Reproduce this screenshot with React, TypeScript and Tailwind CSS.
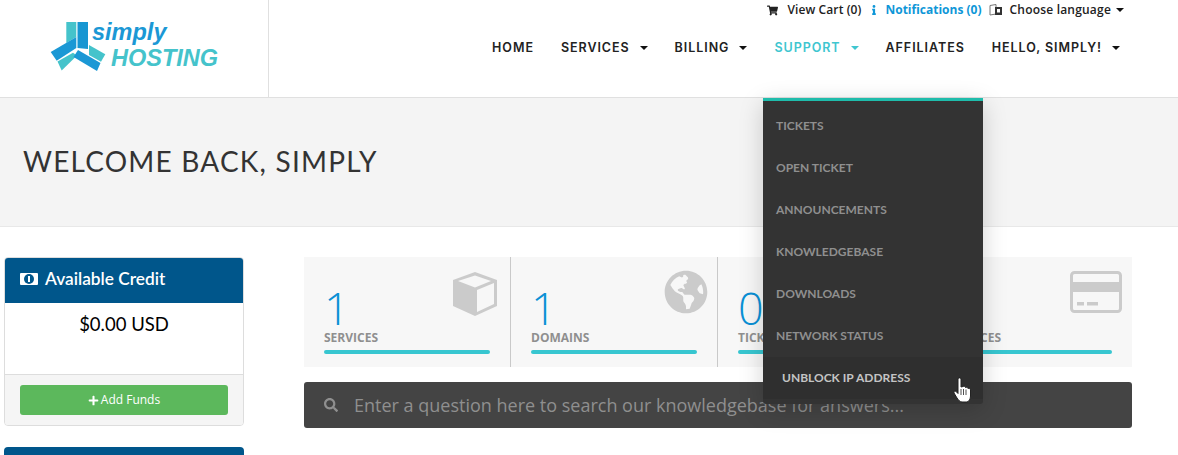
import React from 'react';
import { FaShoppingCart, FaInfo, FaPlus, FaGlobeAmericas, FaSearch } from 'react-icons/fa';

const Caret = ({ className = 'border-t-[#111]' }: { className?: string }) => (
  <span className={`inline-block w-0 h-0 border-x-[4px] border-x-transparent border-t-[4px] ${className}`} />
);

const Logo = () => (
  <div className="flex items-start w-[168px] h-[52px] relative">
    <svg width="58" height="52" viewBox="50 21 58 52" className="shrink-0">
      <polygon points="66.3,22 76.3,22 76.3,37 66.3,43" fill="#45c3cb" />
      <polygon points="77.5,22 88,22 88,49 77.5,48" fill="#1796d2" />
      <polygon points="50.7,52 76.3,37 76.3,48 56.7,60.7" fill="#1b98d5" />
      <polygon points="57.5,61.5 73,52.7 77,55.5 61.7,70.5" fill="#45c3cb" />
      <polygon points="89,45 105.3,54.3 101,61.7 89,55" fill="#45c3cb" />
      <polygon points="78,50 100.5,63 97,71 73.5,57 " fill="#1b98d5" />
    </svg>
    <div className="font-['Liberation_Sans',sans-serif] font-bold italic leading-none ml-[-15px]">
      <div className="text-[#1b98d5] text-[23.5px] -ml-[1px]">simply</div>
      <div className="text-[#45c3cb] text-[23.5px] mt-[2px] ml-[18px]">HOSTING</div>
    </div>
  </div>
);

const NavItem = ({ label, caret, active }: { label: string; caret?: boolean; active?: boolean }) => (
  <div className={`flex items-center gap-[10px] ${active ? 'text-[#3fc6d0]' : 'text-[#222]'}`}>
    <span>{label}</span>
    {caret && <Caret className={active ? 'border-t-[#3fc6d0]' : 'border-t-[#111]'} />}
  </div>
);

const Stat = ({ value, label, icon, iconClass, last }: { value: string; label: string; icon?: React.ReactNode; iconClass?: string; last?: boolean }) => (
  <div className={`relative w-[207px] h-full pl-5 ${last ? 'pr-5' : 'pr-5 border-r border-[#c9c9c9]'}`}>
    <div className={`absolute ${iconClass}`}>{icon}</div>
    <div className="h-[73px] pt-[30px]">
      <div className="font-['Open_Sans',sans-serif] font-light text-[#0a90d5] text-[45px] leading-[42px] h-[42px]">{value}</div>
    </div>
    <div className="font-['Open_Sans',sans-serif] font-bold text-[#8f8f8f] text-[12px] leading-4">{label}</div>
    <div className="h-1 mt-[4px] rounded-sm bg-[#37c6d0]" />
  </div>
);

const menuItems = ['TICKETS', 'OPEN TICKET', 'ANNOUNCEMENTS', 'KNOWLEDGEBASE', 'DOWNLOADS', 'NETWORK STATUS'];

export default function App() {
  return (
    <div className="relative w-[1178px] h-[455px] overflow-hidden bg-white font-['Open_Sans',sans-serif]">
      {/* header */}
      <div className="flex h-[98px] border-b border-[#e0e0e0]">
        <div className="w-[269px] border-r border-[#e0e0e0] pl-[50px] pt-[21px] shrink-0">
          <Logo />
        </div>
        <div className="flex-1 relative">
          <div className="flex items-center justify-end h-[20px] pr-[54px] text-[12px] font-semibold text-[#222]">
            <FaShoppingCart className="text-[11px] mr-[9px]" />
            <span className="mr-[8px] tracking-[0.1px]">View Cart (0)</span>
            <FaInfo className="text-[10px] text-[#0f97d8] mr-[6px]" />
            <span className="text-[#0f97d8] font-bold mr-[7px]">Notifications (0)</span>
            <svg width="14" height="12" viewBox="0 0 14 12" className="mr-[7px]">
              <path d="M1 1.5 L7 0.5 V10 L1 11 Z" fill="#fff" stroke="#777" strokeWidth="1" />
              <rect x="6" y="3" width="7" height="8" fill="#333" />
              <rect x="8" y="5" width="3" height="3.5" fill="#fff" />
            </svg>
            <span className="mr-[5px] tracking-[0.2px]">Choose language</span>
            <Caret />
          </div>
          <div className="flex justify-end gap-[27px] pr-[58px] mt-[20px] font-['Inter',sans-serif] font-semibold text-[12.5px] tracking-[0.95px] leading-[16px]">
            <NavItem label="HOME" />
            <NavItem label="SERVICES" caret />
            <NavItem label="BILLING" caret />
            <NavItem label="SUPPORT" caret active />
            <NavItem label="AFFILIATES" />
            <NavItem label="HELLO, SIMPLY!" caret />
          </div>
        </div>
      </div>

      {/* title band */}
      <div className="h-[129px] bg-[#f4f4f4] border-b border-[#e8e8e8] pl-[23px] pt-[45px]">
        <h1 className="font-['Lato',sans-serif] text-[28px] leading-9 font-normal text-[#333] tracking-[1.2px]">WELCOME BACK, SIMPLY</h1>
      </div>

      {/* content */}
      <div className="flex pl-[4px] pt-[30px] pr-[46px]">
        <div className="w-[240px] shrink-0">
          <div className="border border-[#ddd] rounded-[4px] overflow-hidden h-[169px] flex flex-col">
            <div className="bg-[#00568b] h-[45px] flex items-center pl-[15px] pb-[3px] text-white font-['Lato',sans-serif] font-semibold text-[17.3px] shrink-0">
              <svg width="18" height="12" viewBox="0 0 18 12" className="mr-[7px]">
                <rect width="18" height="12" rx="1" fill="#fff" />
                <ellipse cx="9" cy="6" rx="5" ry="5" fill="#00568b" />
                <rect x="8" y="3" width="2" height="6" fill="#fff" />
              </svg>
              Available Credit
            </div>
            <div className="flex-1 text-center text-black font-['Lato',sans-serif] text-[18.5px] pt-[9px] leading-6">$0.00 USD</div>
            <div className="h-[51px] bg-[#f5f5f5] border-t border-[#ddd] px-[15px] pt-[10px]">
              <div className="h-[30px] rounded-[3px] bg-[#5cb85c] text-white font-['Open_Sans',sans-serif] text-[12px] flex items-center justify-center gap-[2px]">
                <FaPlus className="text-[11px]" />
                Add Funds
              </div>
            </div>
          </div>
          <div className="mt-[21px] h-[40px] bg-[#00568b] rounded-t-[4px]" />
        </div>

        <div className="flex-1 ml-[60px]">
          <div className="flex h-[110px] bg-[#f7f7f7]">
            <Stat
              value="1"
              label="SERVICES"
              iconClass="right-[12px] top-[14px]"
              icon={
                <svg width="46" height="46" viewBox="0 0 46 46">
                  <path d="M23 1 L45 9 V35 L23 45 L1 35 V9 Z" fill="#cbcbcb" />
                  <path d="M25 19 L42 12 V33 L25 41 Z" fill="#f7f7f7" />
                  <path d="M23 4.5 L39 10 L23 16.5 L6 10 Z" fill="#f7f7f7" />
                </svg>
              }
            />
            <Stat value="1" label="DOMAINS" iconClass="right-[9px] top-[13px]" icon={<FaGlobeAmericas className="text-[44px] text-[#cbcbcb]" />} />
            <Stat value="0" label="TICKETS" />
            <Stat
              last
              value=""
              label="INVOICES"
              iconClass="right-[10px] top-[14px]"
              icon={
                <svg width="52" height="42" viewBox="0 0 52 42">
                  <rect x="1.5" y="1.5" width="49" height="39" rx="3" fill="#f7f7f7" stroke="#cbcbcb" strokeWidth="3" />
                  <rect x="3" y="11" width="46" height="10" fill="#cbcbcb" />
                  <rect x="7" y="31" width="7" height="3.5" fill="#cbcbcb" />
                  <rect x="17" y="31" width="11" height="3.5" fill="#cbcbcb" />
                </svg>
              }
            />
          </div>
          <div className="mt-[15px] h-[46px] rounded-[3px] bg-[#444] flex items-center pl-5 text-[#8f8f8f] text-[18px] font-['Open_Sans',sans-serif]">
            <FaSearch className="text-[14px] mr-[16px]" />
            Enter a question here to search our knowledgebase for answers...
          </div>
        </div>
      </div>

      {/* support dropdown */}
      <div className="absolute left-[763px] top-[98px] w-[220px] h-[306px] pt-[4px] bg-[#333] border-t-[3px] border-[#1fbcab] rounded-b-[3px] shadow-[0_6px_24px_rgba(0,0,0,0.18)] font-['Lato',sans-serif] font-bold text-[12px] text-[#8f8f8f]">
        {menuItems.map((item) => (
          <div key={item} className="h-[42px] flex items-center pl-[13px]">{item}</div>
        ))}
        <div className="relative h-[42px] flex items-center pl-[19px] bg-[#2f2f2f] text-[#c4c4c4]">
          UNBLOCK IP ADDRESS
          <svg className="absolute left-[190px] top-[20px]" width="20" height="26" viewBox="0 0 20 26">
            <path d="M5 2 C5 0.5 8 0.5 8 2 V10 L10 9.5 C11 9 12.5 9.5 12.5 10.5 C13.5 10 15 10.5 15 11.5 C16 11 17.5 11.5 17.5 13 V19 C17.5 22 16 24.5 14 25 H9 C7 25 5.5 23 4 21 L1 16 C0.5 14.5 2 13.5 3 14.5 L5 16.5 Z" fill="#fff" stroke="#222" strokeWidth="1" />
            <path d="M8 12 V18 M10.5 12 V18 M13 12.5 V18" stroke="#222" strokeWidth="0.8" />
          </svg>
        </div>
      </div>
    </div>
  );
}
